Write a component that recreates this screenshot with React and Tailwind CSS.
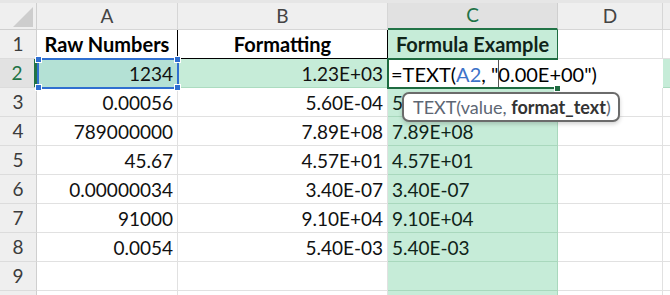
import React from 'react';

const cols = ['A', 'B', 'C', 'D', ''];

const rows = [
  ['Raw Numbers', 'Formatting', 'Formula Example'],
  ['1234', '1.23E+03', ''],
  ['0.00056', '5.60E-04', '5.60E-04'],
  ['789000000', '7.89E+08', '7.89E+08'],
  ['45.67', '4.57E+01', '4.57E+01'],
  ['0.00000034', '3.40E-07', '3.40E-07'],
  ['91000', '9.10E+04', '9.10E+04'],
  ['0.0054', '5.40E-03', '5.40E-03'],
  ['', '', ''],
  ['', '', ''],
];

function Handle({ className }) {
  return <div className={`absolute w-[7px] h-[7px] bg-[#2f6fd0] border border-white ${className}`} />;
}

function HeaderRow() {
  return (
    <>
      <div className="h-[27px] bg-[#efefef] border-r border-b border-[#cfcfcf] relative">
        <svg width="37" height="27" viewBox="0 0 37 27" className="absolute left-0 top-0">
          <polygon points="33,4 33,24 13,24" fill="#cdcdcd" />
        </svg>
      </div>
      {cols.map((c, i) => {
        const active = c === 'C';
        return (
          <div
            key={i}
            className={`h-[27px] flex items-center justify-center text-[19px] ${
              active
                ? 'bg-[#e1e1e1] text-[#217346] border-b-2 border-b-[#217346] border-r border-r-[#cfcfcf]'
                : 'bg-[#efefef] text-[#444] border-r border-b border-[#d6d6d6]'
            }`}
          >
            {c}
          </div>
        );
      })}
    </>
  );
}

function DataRow({ index, data }) {
  const n = index + 1;
  const isHead = n === 1;
  const isActive = n === 2;
  const [a, b, c] = data;
  const base = 'h-[29px] flex items-center px-[4px] leading-none';
  const size = isHead ? 'text-[20px]' : 'text-[19px]';
  return (
    <>
      <div
        className={`h-[29px] flex items-center justify-center text-[19px] border-b border-[#dcdcdc] ${
          isActive
            ? 'bg-[#e2e2e2] text-[#217346] border-r-[3px] border-r-[#217346]'
            : 'bg-[#efefef] text-[#3c3c3c] border-r border-r-[#cfcfcf]'
        }`}
      >
        {n < 10 ? n : ''}
      </div>
      {/* A */}
      <div
        className={`${base} ${size} ${isHead ? 'justify-center font-bold text-black border-r border-b border-black' : 'justify-end text-[#111] border-r border-b'} ${
          isActive ? 'bg-[#b4e1d5] border-[#a3d4c4]' : isHead ? '' : 'border-[#e1e1e1]'
        }`}
      >
        {a}
      </div>
      {/* B */}
      <div
        className={`${base} ${size} ${isHead ? 'justify-center font-bold text-black border-r border-b border-black' : 'justify-end text-[#111] border-r border-b'} ${
          isActive ? 'bg-[#c6ecd8] border-[#acdcc0]' : isHead ? '' : 'border-[#e1e1e1]'
        }`}
      >
        {b}
      </div>
      {/* C */}
      <div
        className={`${base} ${size} bg-[#c6ecd8] text-[#0f2419] ${
          isHead
            ? 'justify-center font-bold border-r border-r-[#1e6b40] border-b border-b-[#1e6b40]'
            : 'justify-start border-r border-b border-[#a9d8bd]'
        }`}
      >
        {c}
      </div>
      {/* D */}
      <div className={`${base} border-r border-b ${isActive ? 'bg-[#c6ecd8] border-[#acdcc0]' : 'border-[#e1e1e1]'}`} />
      {/* E */}
      <div className={`${base} border-r border-b ${isActive ? 'bg-[#c6ecd8] border-[#acdcc0]' : 'border-[#e1e1e1]'}`} />
    </>
  );
}

export default function App() {
  return (
    <div className="w-[670px] h-[295px] overflow-hidden bg-white relative font-['Lato','Open_Sans',sans-serif]">
      <div className="h-[3px] bg-[#e6e6e6]" />
      <div className="grid grid-cols-[37px_141px_210px_170px_105px_220px]">
        <HeaderRow />
        {rows.map((r, i) => (
          <DataRow key={i} index={i} data={r} />
        ))}
      </div>

      {/* A2 reference highlight */}
      <div className="absolute left-[37px] top-[58px] w-[142px] h-[31px] border-2 border-[#2f6fd0]">
        <Handle className="-left-[4px] -top-[4px]" />
        <Handle className="-right-[4px] -top-[4px]" />
        <Handle className="-left-[4px] -bottom-[4px]" />
        <Handle className="-right-[4px] -bottom-[4px]" />
      </div>

      {/* C2 in edit mode */}
      <div className="absolute left-[388px] top-[59px] w-[275px] h-[29px] bg-white flex items-center pl-[3px] text-[20px] text-black whitespace-nowrap">
        <span>=TEXT(</span>
        <span className="text-[#3d72c8]">A2</span>
        <span>,&nbsp;"</span>
        <span className="inline-block w-px h-[27px] bg-[#555] -mr-px" />
        <span>0.00E+00")</span>
      </div>
      <div className="absolute left-[387px] top-[58px] w-[171px] h-[31px] border-2 border-r-0 border-[#1e6b40]" />
      <div className="absolute left-[554px] top-[85px] w-[7px] h-[7px] bg-[#1e6b40] border border-white" />

      {/* function tooltip */}
      <div className="absolute left-[402px] top-[92px] w-[218px] h-[30px] rounded-[7px] border-2 border-[#6b6b6b] bg-white shadow-[0_2px_4px_rgba(0,0,0,0.18)] flex items-center pl-[9px] text-[18px] whitespace-nowrap">
        <span className="text-[#5d6673]">TEXT(value,&nbsp;</span>
        <span className="font-bold text-[#333]">format_text</span>
        <span className="text-[#5d6673]">)</span>
      </div>
    </div>
  );
}
